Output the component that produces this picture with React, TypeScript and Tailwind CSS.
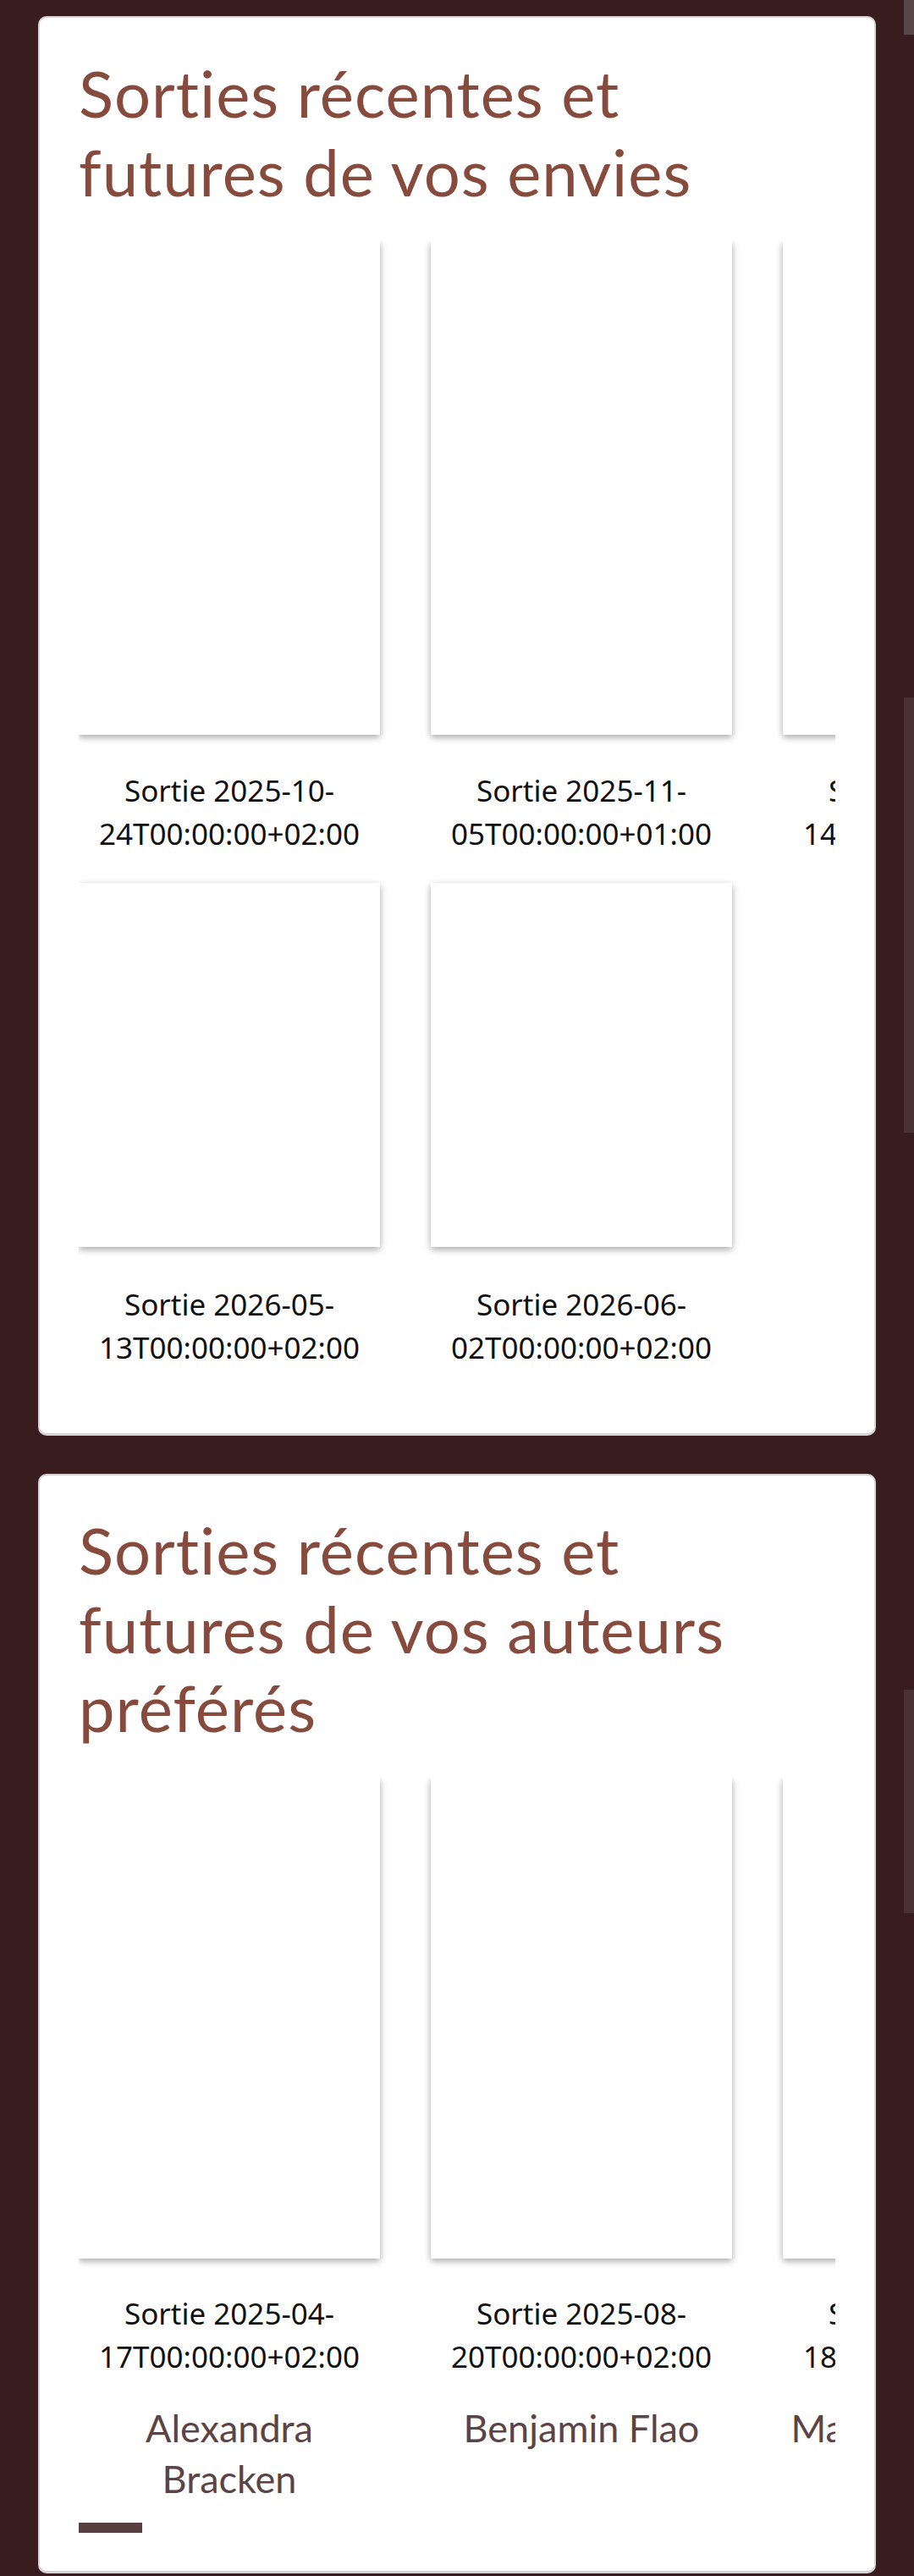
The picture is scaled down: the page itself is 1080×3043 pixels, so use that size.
import React from "react";

type Item = { l1: string; l2: string; author?: string };

const row1: Item[] = [
  { l1: "Sortie 2025-10-", l2: "24T00:00:00+02:00" },
  { l1: "Sortie 2025-11-", l2: "05T00:00:00+01:00" },
  { l1: "Sortie 2025-11-", l2: "14T00:00:00+01:00" },
];
const row2: Item[] = [
  { l1: "Sortie 2026-05-", l2: "13T00:00:00+02:00" },
  { l1: "Sortie 2026-06-", l2: "02T00:00:00+02:00" },
];
const authors: Item[] = [
  { l1: "Sortie 2025-04-", l2: "17T00:00:00+02:00", author: "Alexandra Bracken" },
  { l1: "Sortie 2025-08-", l2: "20T00:00:00+02:00", author: "Benjamin Flao" },
  { l1: "Sortie 2025-09-", l2: "18T00:00:00+02:00", author: "Mathieu Lauffray" },
];

const titleCls =
  "font-['Lato',sans-serif] text-[76px] leading-[93px] tracking-[1px] text-[#874b3d] font-normal";
const dateCls =
  "font-['Noto_Sans',sans-serif] text-[35px] leading-[51px] text-[#111] text-center";

function Book({ item, h, textGap }: { item: Item; h: string; textGap: string }) {
  return (
    <div className="w-[356px] shrink-0 flex flex-col">
      <div className={`${h} w-full bg-white shadow-[0_3px_8px_rgba(0,0,0,0.35)]`} />
      <p className={`${dateCls} ${textGap} whitespace-nowrap`}>
        {item.l1}
        <br />
        {item.l2}
      </p>
      {item.author && (
        <p className="mt-[29px] font-['Lato',sans-serif] text-[45px] leading-[60px] text-[#5c4345] text-center">
          {item.author}
        </p>
      )}
    </div>
  );
}

export default function App() {
  return (
    <div className="relative min-h-[3043px] bg-[#391c1e] px-[45px] pt-[19px] pb-[3px]">
      {/* scroll overlays */}
      <div className="absolute right-0 top-0 w-[12px] h-[41px] bg-[#574748]" />
      <div className="absolute right-0 top-[824px] w-[12px] h-[514px] bg-[#4a3133]" />
      <div className="absolute right-0 top-[1996px] w-[12px] h-[264px] bg-[#4a3133]" />

      <section className="rounded-[10px] bg-white border-2 border-b-[3px] border-[#d7d3d3] px-[46px] pt-[42px] pb-[76px]">
        <h2 className={titleCls}>
          Sorties récentes et
          <br />
          futures de vos envies
        </h2>
        <div className="mt-[36px] overflow-hidden">
          <div className="flex gap-[60px]">
            {row1.map((it, i) => (
              <Book key={i} item={it} h="h-[583px]" textGap="mt-[40px]" />
            ))}
          </div>
          <div className="flex gap-[60px] mt-[33px]">
            {row2.map((it, i) => (
              <Book key={i} item={it} h="h-[430px]" textGap="mt-[42px]" />
            ))}
          </div>
        </div>
      </section>

      <section className="mt-[45px] rounded-[10px] bg-white border-2 border-b-[3px] border-[#d7d3d3] px-[46px] pt-[41px] pb-[45px]">
        <h2 className={titleCls}>
          Sorties récentes et
          <br />
          futures de vos auteurs
          <br />
          préférés
        </h2>
        <div className="mt-[37px] overflow-hidden">
          <div className="flex gap-[60px]">
            {authors.map((it, i) => (
              <Book key={i} item={it} h="h-[568px]" textGap="mt-[39px]" />
            ))}
          </div>
        </div>
        <div className="mt-[22px] w-[75px] h-[12px] bg-[#5a3d40]" />
      </section>
    </div>
  );
}
